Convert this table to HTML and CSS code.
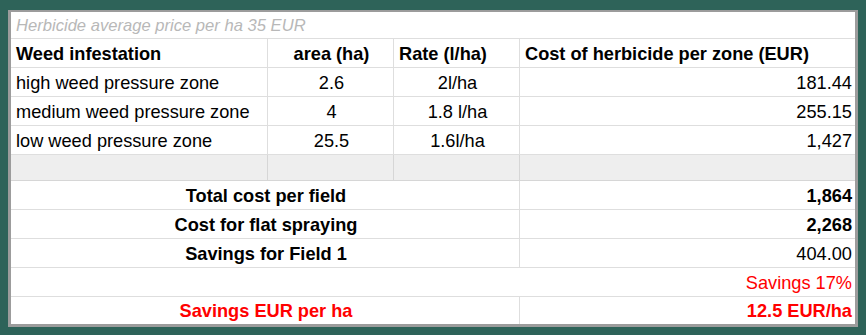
FILE: index.html
```html
<!DOCTYPE html>
<html>
<head>
<meta charset="utf-8">
<link rel="stylesheet" href="styles.css">
</head>
<body>
<div class="frame">
  <div class="sheet">
    <div class="cell span4 title">Herbicide average price per ha 35 EUR</div>

    <div class="cell b">Weed infestation</div>
    <div class="cell b c">area (ha)</div>
    <div class="cell b">Rate (l/ha)</div>
    <div class="cell b last">Cost of herbicide per zone (EUR)</div>

    <div class="cell">high weed pressure zone</div>
    <div class="cell c">2.6</div>
    <div class="cell c">2l/ha</div>
    <div class="cell r last">181.44</div>

    <div class="cell">medium weed pressure zone</div>
    <div class="cell c">4</div>
    <div class="cell c">1.8 l/ha</div>
    <div class="cell r last">255.15</div>

    <div class="cell">low weed pressure zone</div>
    <div class="cell c">25.5</div>
    <div class="cell c">1.6l/ha</div>
    <div class="cell r last">1,427</div>

    <div class="cell grey"></div>
    <div class="cell grey"></div>
    <div class="cell grey"></div>
    <div class="cell grey last"></div>

    <div class="cell span3 b c">Total cost per field</div>
    <div class="cell b r last">1,864</div>

    <div class="cell span3 b c">Cost for flat spraying</div>
    <div class="cell b r last">2,268</div>

    <div class="cell span3 b c">Savings for Field 1</div>
    <div class="cell r last">404.00</div>

    <div class="cell span4 r red">Savings 17%</div>

    <div class="cell span3 b c red nob">Savings EUR per ha</div>
    <div class="cell b r red last nob">12.5 EUR/ha</div>
  </div>
</div>
</body>
</html>
```

FILE: styles.css
```css
html, body {
  margin: 0;
  padding: 0;
}
body {
  background: #2e6359;
  width: 866px;
  height: 335px;
  overflow: hidden;
  font-family: "Liberation Sans", Arial, sans-serif;
}
.frame {
  margin: 10px 0 0 8px;
  width: 850px;
  border-style: solid;
  border-color: #9c9c9c;
  border-width: 2px 3px 3px 3px;
  box-sizing: border-box;
  background: #fff;
}
.sheet {
  display: grid;
  grid-template-columns: 257px 126px 126px 335px;
  grid-template-rows: 27px 29px 29px 29px 29px 26px 29px 29px 29px 29px 27px;
}
.cell {
  box-sizing: border-box;
  border-right: 1px solid #dedede;
  border-bottom: 1px solid #dedede;
  display: flex;
  align-items: flex-end;
  padding: 0 3px 3px 5px;
  font-size: 18.2px;
  line-height: 20px;
  color: #000;
  white-space: nowrap;
  overflow: hidden;
}
.last { border-right: none; }
.nob { border-bottom: none; }
.span3 { grid-column: span 3; }
.span4 { grid-column: span 4; border-right: none; }
.b { font-weight: bold; }
.c { justify-content: center; }
.r { justify-content: flex-end; }
.red { color: #ff0000; }
.grey { background: #eeeeee; border-color: #d6d6d6; }
.title {
  font-style: italic;
  font-size: 16.6px;
  color: #b8b8b8;
  padding-bottom: 2px;
}
```
